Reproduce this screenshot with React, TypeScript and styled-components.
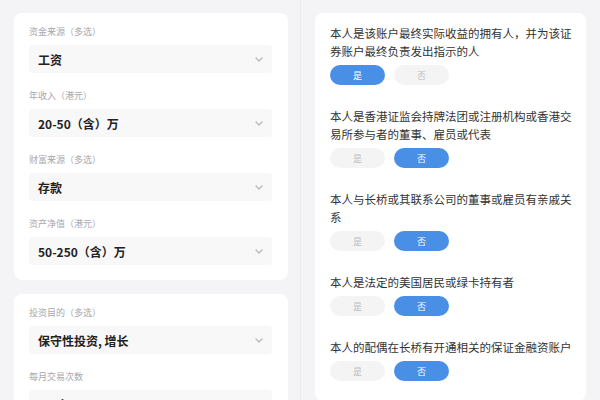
import styled, { createGlobalStyle } from 'styled-components'

const GlobalStyle = createGlobalStyle`
  body {
    margin: 0;
    background: #f4f4f6;
    font-family: 'Noto Sans CJK SC', 'Noto Sans', sans-serif;
  }
`

const Page = styled.div`
  display: grid;
  grid-template-columns: 300px 300px;
  height: 400px;
  overflow: hidden;
`

const Column = styled.div<{ side: 'left' | 'right' }>`
  display: flex;
  flex-direction: column;
  gap: 14px;
  padding: ${({ side }) => (side === 'left' ? '13px 12px 0 14px' : '13px 14px 0 14px')};
  border-left: ${({ side }) => (side === 'right' ? '1px solid #ececee' : 'none')};
`

const Card = styled.div`
  background: #fff;
  border-radius: 8px;
  padding: 12px 16px 15px 15px;
  display: flex;
  flex-direction: column;
  flex-shrink: 0;
`

const Field = styled.div`
  display: flex;
  flex-direction: column;
  gap: 6px;
  & + & {
    margin-top: 16px;
  }
`

const Label = styled.div`
  font-size: 9px;
  line-height: 14px;
  color: #a8a8ac;
`

const Select = styled.div`
  height: 28px;
  background: #f8f8f9;
  border-radius: 4px;
  display: flex;
  align-items: center;
  justify-content: space-between;
  padding: 0 9px 0 9px;
`

const Value = styled.span`
  font-size: 12px;
  font-weight: 700;
  color: #222;
`

const Chevron = () => (
  <svg width="8" height="5" viewBox="0 0 8 5">
    <polyline points="1,1 4,4 7,1" fill="none" stroke="#b8b8bc" strokeWidth="1.3" strokeLinecap="round" strokeLinejoin="round" />
  </svg>
)

const QuestionCard = styled.div`
  background: #fff;
  border-radius: 8px;
  padding: 11px 10px 20px 15px;
  display: flex;
  flex-direction: column;
  gap: 22px;
  flex-shrink: 0;
`

const Question = styled.div`
  display: flex;
  flex-direction: column;
  gap: 5px;
`

const QuestionText = styled.div`
  font-size: 11.5px;
  line-height: 18px;
  color: #333;
  white-space: nowrap;
`

const Choices = styled.div`
  display: flex;
  gap: 9px;
`

const Choice = styled.div<{ active: boolean }>`
  width: 55px;
  height: 20px;
  border-radius: 10px;
  display: flex;
  align-items: center;
  justify-content: center;
  font-size: 9px;
  background: ${({ active }) => (active ? '#4a8fe6' : '#f4f4f5')};
  color: ${({ active }) => (active ? '#fff' : '#bdbdc0')};
`

const cardOne = [
  { label: '资金来源（多选）', value: '工资' },
  { label: '年收入（港元）', value: '20-50（含）万' },
  { label: '财富来源（多选）', value: '存款' },
  { label: '资产净值（港元）', value: '50-250（含）万' },
]

const cardTwo = [
  { label: '投资目的（多选）', value: '保守性投资, 增长' },
  { label: '每月交易次数', value: '1-5次' },
]

const questions = [
  { lines: ['本人是该账户最终实际收益的拥有人，并为该证', '券账户最终负责发出指示的人'], yes: true },
  { lines: ['本人是香港证监会持牌法团或注册机构或香港交', '易所参与者的董事、雇员或代表'], yes: false },
  { lines: ['本人与长桥或其联系公司的董事或雇员有亲戚关', '系'], yes: false },
  { lines: ['本人是法定的美国居民或绿卡持有者'], yes: false },
  { lines: ['本人的配偶在长桥有开通相关的保证金融资账户'], yes: false },
]

const FieldCard = ({ fields }: { fields: { label: string; value: string }[] }) => (
  <Card>
    {fields.map(f => (
      <Field key={f.label}>
        <Label>{f.label}</Label>
        <Select>
          <Value>{f.value}</Value>
          <Chevron />
        </Select>
      </Field>
    ))}
  </Card>
)

export default function App() {
  return (
    <>
      <GlobalStyle />
      <Page>
        <Column side="left">
          <FieldCard fields={cardOne} />
          <FieldCard fields={cardTwo} />
        </Column>
        <Column side="right">
          <QuestionCard>
            {questions.map((q, i) => (
              <Question key={i}>
                <QuestionText>
                  {q.lines.map((line, j) => (
                    <div key={j}>{line}</div>
                  ))}
                </QuestionText>
                <Choices>
                  <Choice active={q.yes}>是</Choice>
                  <Choice active={!q.yes}>否</Choice>
                </Choices>
              </Question>
            ))}
          </QuestionCard>
        </Column>
      </Page>
    </>
  )
}
